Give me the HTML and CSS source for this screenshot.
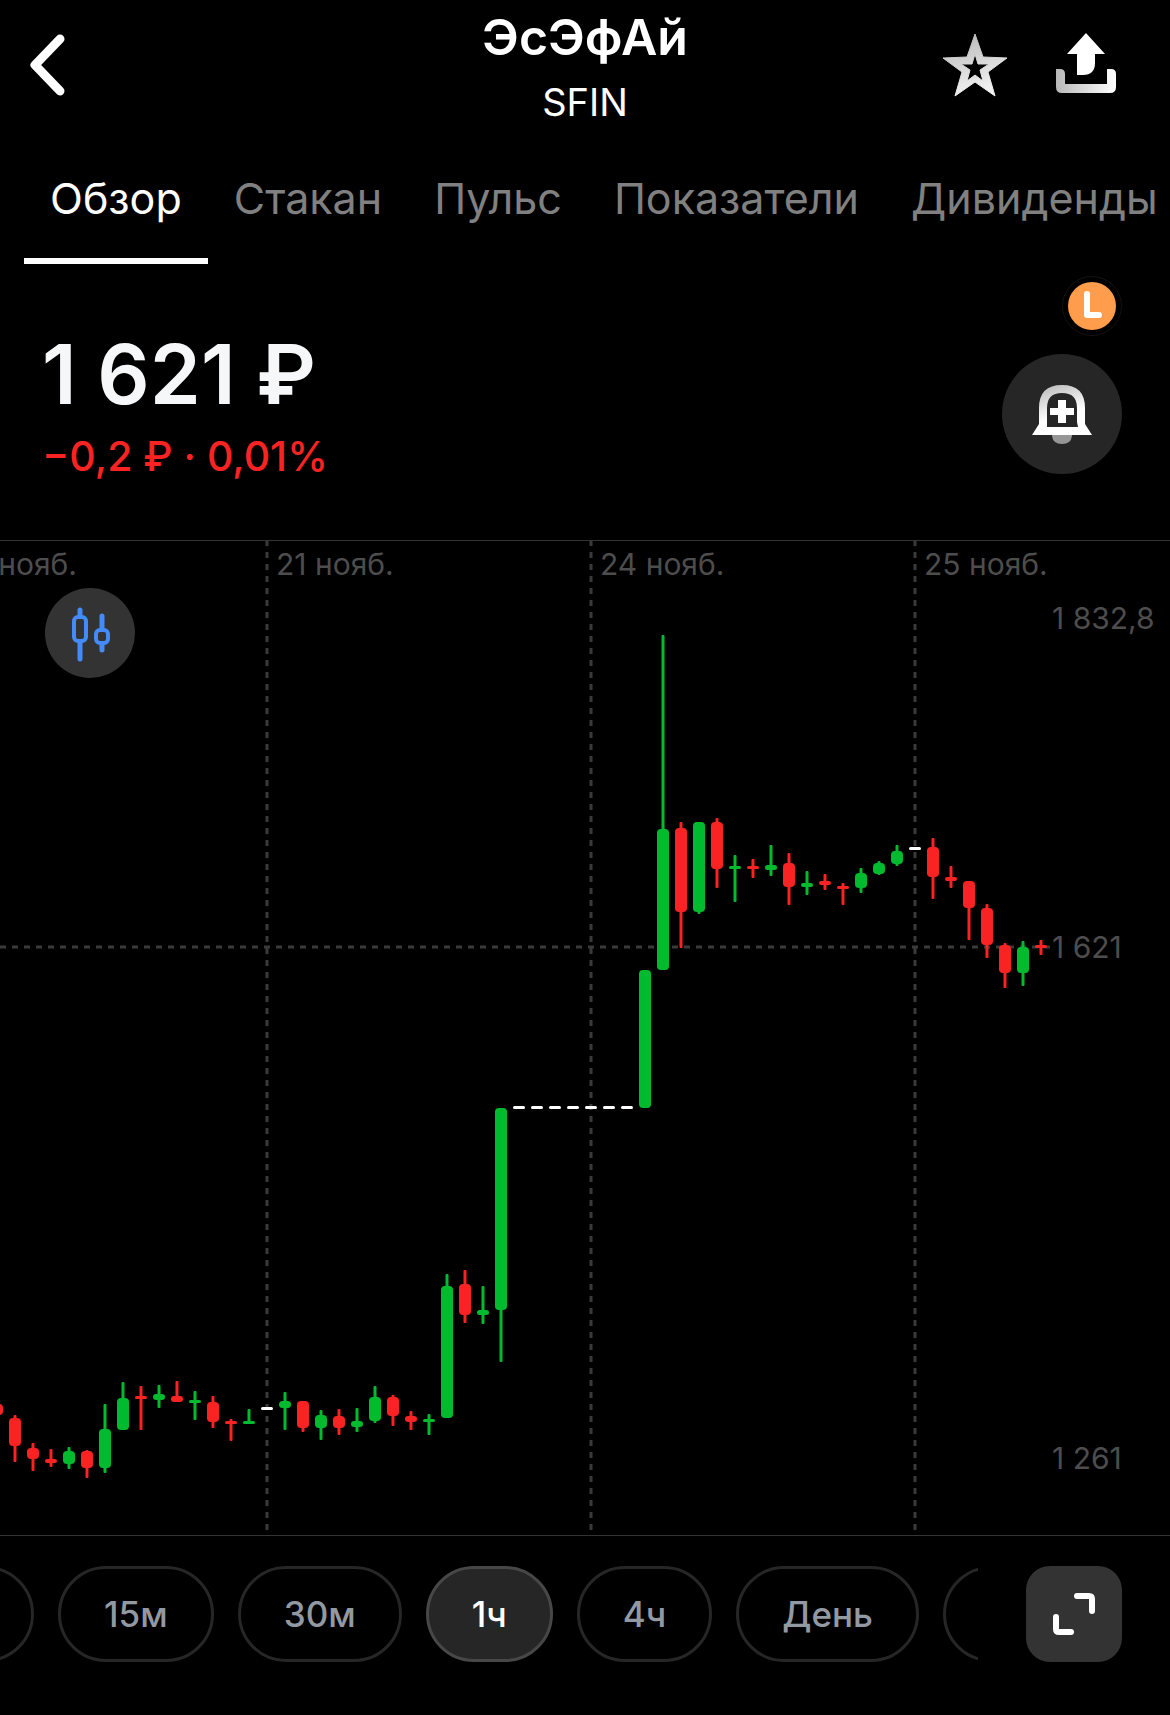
FILE: index.html
```html
<!DOCTYPE html>
<html lang="ru">
<head>
    <meta charset="UTF-8">
    <meta name="viewport" content="width=device-width, initial-scale=1.0">
    <title>ЭсЭфАй</title>
    <link rel="stylesheet" href="styles.css">
</head>
<body>
    <header class="header">
        <button class="icon-button" aria-label="Назад">
            <svg width="36" height="64" viewBox="0 0 36 64">
                <path d="M30 5 L5 31 L30 57" fill="none" stroke="#fff" stroke-width="9" stroke-linecap="round" stroke-linejoin="round"/>
            </svg>
        </button>
        <div class="heading">
            <h1>ЭсЭфАй</h1>
            <p>SFIN</p>
        </div>
        <div class="header-actions">
            <button class="icon-button" aria-label="В избранное">
                <svg width="66" height="66" viewBox="0 0 66 66">
                    <defs>
                        <linearGradient id="star-fill" x1="0" y1="0" x2="0.3" y2="1">
                            <stop offset="0" stop-color="#b4b4b4"/>
                            <stop offset="1" stop-color="#f2f2f2"/>
                        </linearGradient>
                    </defs>
                    <path fill="url(#star-fill)" fill-rule="evenodd" stroke="url(#star-fill)" stroke-width="1" stroke-linejoin="round" d="M33 1 L41 24 L65 25 L46 39 L53 63 L33 49 L13 63 L20 39 L1 25 L25 24 Z M33 21 L30 31 L19 31 L28 37 L25 48 L33 42 L41 48 L38 37 L47 31 L36 31 Z"/>
                </svg>
            </button>
            <button class="icon-button" aria-label="Поделиться">
                <svg width="60" height="66" viewBox="0 0 60 66">
                    <defs>
                        <linearGradient id="tray-fill" x1="0" y1="0" x2="1" y2="0">
                            <stop offset="0" stop-color="#b8b8b8"/>
                            <stop offset="1" stop-color="#fff"/>
                        </linearGradient>
                    </defs>
                    <path fill="#fff" d="M30 0 L49 21 H39 V30 Q39 42 27 42 H21 V21 H11 Z"/>
                    <path fill="url(#tray-fill)" d="M0 36 H4 Q9 36 9 41 V51 H51 V36 H55 Q60 36 60 41 V54 Q60 60 54 60 H6 Q0 60 0 54 Z"/>
                </svg>
            </button>
        </div>
    </header>

    <nav class="tabs">
        <a class="tab active" href="#overview">Обзор</a>
        <a class="tab" href="#orderbook">Стакан</a>
        <a class="tab" href="#pulse">Пульс</a>
        <a class="tab" href="#indicators">Показатели</a>
        <a class="tab" href="#dividends">Дивиденды</a>
    </nav>

    <section class="quote">
        <div class="quote-values">
            <div class="price">1 621 ₽</div>
            <div class="change">−0,2 ₽ · 0,01%</div>
        </div>
        <div class="quote-actions">
            <span class="badge">
                <svg width="48" height="48" viewBox="0 0 48 48" role="img" aria-label="L">
                    <circle cx="24" cy="24" r="24" fill="#ff9d4d"/>
                    <path d="M19 12 V33 H31" fill="none" stroke="#fff" stroke-width="6" stroke-linecap="round" stroke-linejoin="round"/>
                </svg>
            </span>
            <button class="alert-button" aria-label="Добавить уведомление">
                <svg width="60" height="60" viewBox="0 0 60 60">
                    <defs>
                        <linearGradient id="bell-fill" x1="0" y1="0" x2="0.4" y2="1">
                            <stop offset="0" stop-color="#b4b4b4"/>
                            <stop offset="0.7" stop-color="#fff"/>
                        </linearGradient>
                    </defs>
                    <path fill="#969696" d="M20 51 H40 V52 Q39 60 30 60 Q21 60 20 52 Z"/>
                    <path fill="url(#bell-fill)" fill-rule="evenodd" d="M0 51 L7 40 V24 Q7 1 30 1 Q53 1 53 24 V40 L60 51 Z M15 43 H46 L45 38 V24 Q45 9 30 9 Q15 9 15 24 V38 Z"/>
                    <path fill="#fff" d="M26 16 H34 V24 H42 V31 H34 V39 H26 V31 H18 V24 H26 Z"/>
                </svg>
            </button>
        </div>
    </section>

    <div class="chart">
        <svg id="chart" class="chart-canvas" viewBox="0 541 1170 994">
            <g class="grid">
                <line x1="267" y1="540" x2="267" y2="1530"/>
                <line x1="591" y1="540" x2="591" y2="1530"/>
                <line x1="915" y1="540" x2="915" y2="1530"/>
                <line x1="0" y1="947" x2="1050" y2="947"/>
            </g>
            <g class="labels">
                <text x="77" y="575" text-anchor="end">нояб.</text>
                <text x="276" y="575">21 нояб.</text>
                <text x="600" y="575">24 нояб.</text>
                <text x="924" y="575">25 нояб.</text>
                <text x="1052" y="629">1 832,8</text>
                <text x="1052" y="958">1 621</text>
                <text x="1052" y="1469">1 261</text>
            </g>
            <g id="candles"></g>
        </svg>
        <button class="chart-type" aria-label="Свечи">
            <svg width="40" height="60" viewBox="-1 -4 40 60" fill="none" stroke="#428bf9" stroke-width="5" stroke-linecap="round">
                <path d="M9 3 V9 M9 35 V52 M31 9 V22 M31 38 V43"/>
                <rect x="3" y="10" width="12" height="24" rx="4" stroke-width="4"/>
                <rect x="25" y="23" width="12" height="13" rx="4" stroke-width="4"/>
            </svg>
        </button>
    </div>

    <div class="toolbar">
        <div class="intervals">
            <button class="chip">5м</button>
            <button class="chip">15м</button>
            <button class="chip">30м</button>
            <button class="chip selected">1ч</button>
            <button class="chip">4ч</button>
            <button class="chip">День</button>
            <button class="chip">Неделя</button>
        </div>
        <button class="fullscreen" aria-label="На весь экран">
            <svg width="42" height="42" viewBox="0 0 42 42" fill="none" stroke="#fff" stroke-width="6" stroke-linecap="round" stroke-linejoin="round">
                <path d="M24 3 H36 Q39 3 39 6 V18 M3 24 V36 Q3 39 6 39 H18"/>
            </svg>
        </button>
    </div>

    <script>
        // direction, wick top, wick bottom, body top, body bottom
        const candles = [
            ["down", 1404, 1415, 1404, 1415],
            ["down", 1415, 1462, 1418, 1446],
            ["down", 1443, 1471, 1448, 1459],
            ["down", 1449, 1467, 1459, 1463],
            ["up", 1447, 1469, 1451, 1464],
            ["down", 1450, 1478, 1451, 1468],
            ["up", 1404, 1473, 1429, 1468],
            ["up", 1382, 1430, 1398, 1430],
            ["down", 1386, 1430, 1396, 1399],
            ["up", 1385, 1408, 1394, 1400],
            ["down", 1381, 1402, 1396, 1402],
            ["up", 1391, 1420, 1400, 1403],
            ["down", 1396, 1428, 1402, 1422],
            ["down", 1419, 1441, 1421, 1424],
            ["up", 1409, 1424, 1421, 1424],
            ["flat", 1407, 1410, 1407, 1410],
            ["up", 1392, 1430, 1401, 1408],
            ["down", 1401, 1432, 1401, 1428],
            ["up", 1410, 1440, 1415, 1428],
            ["down", 1409, 1435, 1416, 1428],
            ["up", 1408, 1432, 1421, 1427],
            ["up", 1386, 1423, 1397, 1421],
            ["down", 1395, 1426, 1397, 1416],
            ["down", 1411, 1430, 1416, 1422],
            ["up", 1414, 1435, 1419, 1422],
            ["up", 1274, 1418, 1286, 1418],
            ["down", 1270, 1323, 1284, 1315],
            ["up", 1286, 1324, 1310, 1315],
            ["up", 1108, 1362, 1108, 1310],
            ["flat", 1106, 1109, 1106, 1109],
            ["flat", 1106, 1109, 1106, 1109],
            ["flat", 1106, 1109, 1106, 1109],
            ["flat", 1106, 1109, 1106, 1109],
            ["flat", 1106, 1109, 1106, 1109],
            ["flat", 1106, 1109, 1106, 1109],
            ["flat", 1106, 1109, 1106, 1109],
            ["up", 970, 1108, 970, 1108],
            ["up", 635, 970, 829, 970],
            ["down", 822, 948, 828, 912],
            ["up", 822, 914, 822, 912],
            ["down", 818, 888, 822, 869],
            ["up", 855, 902, 866, 869],
            ["down", 859, 878, 866, 869],
            ["up", 845, 876, 865, 870],
            ["down", 853, 905, 863, 887],
            ["up", 871, 895, 883, 887],
            ["down", 874, 890, 881, 885],
            ["down", 883, 905, 886, 889],
            ["up", 868, 893, 873, 888],
            ["up", 861, 875, 863, 874],
            ["up", 845, 866, 851, 864],
            ["flat", 847, 850, 847, 850],
            ["down", 838, 899, 847, 877],
            ["down", 866, 888, 877, 881],
            ["down", 881, 940, 881, 908],
            ["down", 904, 958, 908, 945],
            ["down", 943, 988, 945, 973],
            ["up", 941, 986, 947, 973],
            ["down", 940, 955, 945, 948]
        ];

        function addRect(className, x, y, width, height, radius) {
            const rect = document.createElementNS("http://www.w3.org/2000/svg", "rect");
            rect.setAttribute("class", className);
            rect.setAttribute("x", x);
            rect.setAttribute("y", y);
            rect.setAttribute("width", width);
            rect.setAttribute("height", height);
            rect.setAttribute("rx", radius);
            document.getElementById("candles").appendChild(rect);
        }

        candles.forEach(function ([direction, high, low, top, bottom], i) {
            const x = i * 18 - 3;
            if (direction !== "flat") {
                addRect(direction, x - 1.5, high, 3, low - high, 1);
            }
            addRect(direction, x - 6, top, 12, bottom - top, Math.min(4, (bottom - top) / 2));
        });
    </script>
</body>
</html>
```

FILE: styles.css
```css
:root {
    --bg-color: #000;
    --text-color: #fff;
    --muted-color: #808080;
    --label-color: #4d4d4d;
    --line-color: #333;
    --surface: #333;
    --up-color: #00bb2d;
    --down-color: #fa2323;
}
* {
    box-sizing: border-box;
}
body {
    font-family: Inter, "Liberation Sans", sans-serif;
    margin: 0;
    background: var(--bg-color);
    color: var(--text-color);
}
button {
    font-family: inherit;
    margin: 0;
    padding: 0;
    border: none;
    background: none;
    color: inherit;
    cursor: pointer;
}
svg {
    display: block;
}
.header {
    display: grid;
    grid-template-columns: 1fr auto 1fr;
    align-items: center;
    padding: 7px 54px 0 30px;
}
.heading {
    text-align: center;
    margin-right: -24px;
}
.heading h1 {
    margin: 0 0 12px;
    font-size: 50px;
    line-height: 60px;
    font-weight: 600;
}
.heading p {
    margin: 0;
    font-size: 38px;
    line-height: 46px;
}
.header-actions {
    display: flex;
    align-items: center;
    justify-content: flex-end;
    gap: 48px;
}
.tabs {
    display: flex;
    padding: 47px 0 0 24px;
    overflow: hidden;
}
.tab {
    padding: 0 26px 34px;
    border-bottom: 6px solid transparent;
    color: var(--muted-color);
    font-size: 43px;
    line-height: 52px;
    text-decoration: none;
    white-space: nowrap;
}
.tab.active {
    color: var(--text-color);
    border-bottom-color: var(--text-color);
}
.quote {
    display: flex;
    justify-content: space-between;
    align-items: flex-end;
    padding: 12px 48px 66px 42px;
}
.price {
    margin-bottom: 18px;
    color: #f6f7f8;
    font-size: 82px;
    line-height: 90px;
    font-weight: 600;
}
.change {
    color: var(--down-color);
    font-size: 41px;
    line-height: 36px;
    font-weight: 500;
}
.quote-actions {
    display: flex;
    flex-direction: column;
    align-items: flex-end;
    gap: 18px;
}
.badge {
    padding: 5px;
    border: 1px solid #161210;
    border-radius: 50%;
}
.alert-button {
    display: flex;
    align-items: center;
    justify-content: center;
    width: 120px;
    height: 120px;
    border-radius: 50%;
    background: #262626;
}
.chart {
    position: relative;
    border-top: 1px solid var(--line-color);
    border-bottom: 1px solid var(--line-color);
}
.chart-canvas {
    width: 100%;
}
.grid line {
    stroke: #3a3a3a;
    stroke-width: 3;
    stroke-dasharray: 6 6;
}
.labels text {
    fill: var(--label-color);
    font-size: 30px;
}
.up {
    fill: var(--up-color);
}
.down {
    fill: var(--down-color);
}
.flat {
    fill: #fff;
}
.chart-type {
    position: absolute;
    top: 47px;
    left: 45px;
    display: flex;
    align-items: center;
    justify-content: center;
    width: 90px;
    height: 90px;
    border-radius: 50%;
    background: var(--surface);
}
.toolbar {
    display: flex;
    gap: 48px;
    padding: 30px 48px 53px 0;
}
.intervals {
    display: flex;
    flex: 1;
    gap: 24px;
    min-width: 0;
    overflow: hidden;
}
.chip {
    flex-shrink: 0;
    height: 96px;
    padding: 0 43px;
    border: 3px solid #262626;
    border-radius: 48px;
    color: #9299a2;
    font-size: 35px;
    font-weight: 500;
    white-space: nowrap;
}
/* the row is scrolled past the first interval */
.chip:first-child {
    margin-left: -107px;
}
.chip.selected {
    border-color: #474747;
    background: #262626;
    color: var(--text-color);
}
.fullscreen {
    display: flex;
    flex-shrink: 0;
    align-items: center;
    justify-content: center;
    width: 96px;
    height: 96px;
    border-radius: 24px;
    background: var(--surface);
}
```
